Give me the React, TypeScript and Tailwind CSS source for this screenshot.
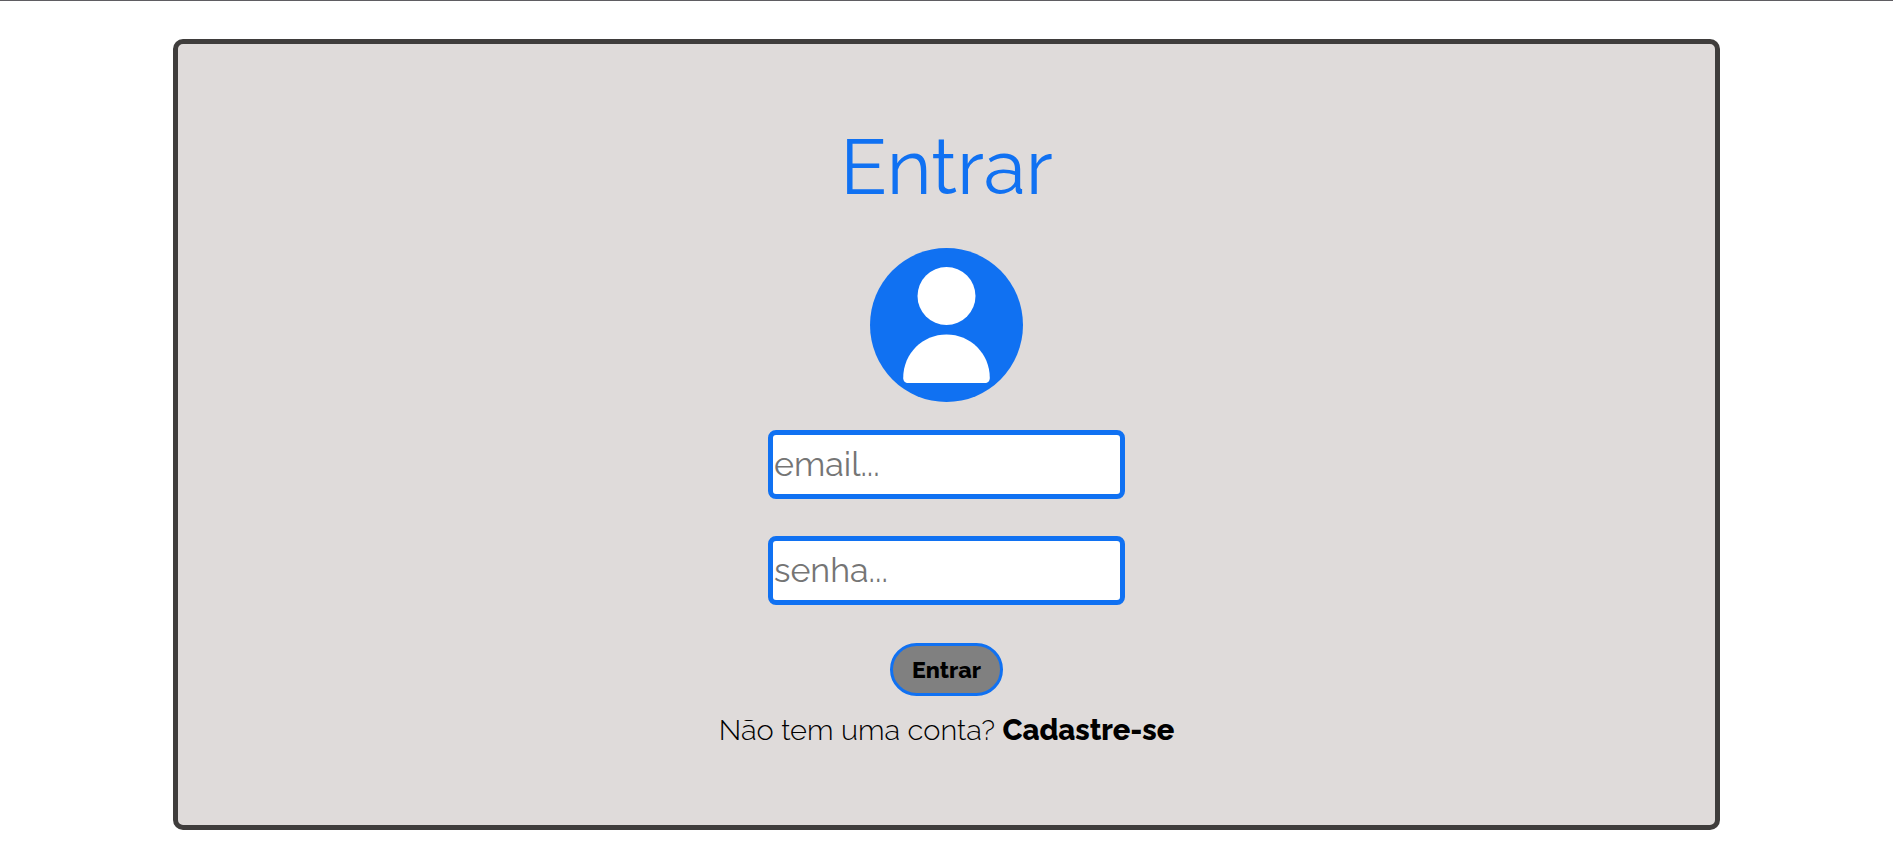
function Avatar() {
  return (
    <svg viewBox="0 0 153 154" className="mt-9 h-[154px] w-[153px]" aria-hidden="true">
      <ellipse cx="76.5" cy="77" rx="76.5" ry="77" fill="#1071f2" />
      <circle cx="76.5" cy="48" r="29" fill="#fff" />
      <path
        d="M76.5 86.5C100.5 86.5 119.8 105.5 119.8 130C119.8 133 117.8 135 114.8 135H38.2C35.2 135 33.2 133 33.2 130C33.2 105.5 52.5 86.5 76.5 86.5Z"
        fill="#fff"
      />
    </svg>
  );
}

function Field({ name, type }: { name: string; type: string }) {
  return (
    <input
      type={type}
      name={name}
      aria-label={name}
      placeholder={`${name}...`}
      className="h-[69px] w-[357px] rounded-lg border-5 border-[#1071f2] bg-white px-px pb-px text-[34px] font-normal text-black placeholder:text-[#757575]"
    />
  );
}

export default function App() {
  return (
    <main className="border-t border-[#5f5d62] bg-white pb-9 font-['Raleway','Lato',sans-serif] text-black">
      <section className="mx-auto mt-[38px] box-content flex w-4/5 flex-col items-center rounded-[10px] border-5 border-[#3f3d3c] bg-[#dfdbda] px-[11px] pt-[78px] pb-[77px]">
        <h1 className="text-[77px] leading-[90px] font-normal text-[#1071f2]">Entrar</h1>
        <Avatar />
        <form className="mt-7 flex flex-col items-center" onSubmit={(e) => e.preventDefault()}>
          <div className="flex flex-col gap-[37px]">
            <Field name="email" type="email" />
            <Field name="senha" type="password" />
          </div>
          <button
            type="submit"
            className="mt-[38px] h-[53px] w-[113px] cursor-pointer rounded-full border-3 border-[#1071f2] bg-[#808080] text-[23px] leading-none font-extrabold"
          >
            Entrar
          </button>
        </form>
        <p className="mt-4 text-[29px] leading-9 font-light">
          Não tem uma conta?{" "}
          <a href="#cadastro" className="font-extrabold">
            Cadastre-se
          </a>
        </p>
      </section>
    </main>
  );
}
